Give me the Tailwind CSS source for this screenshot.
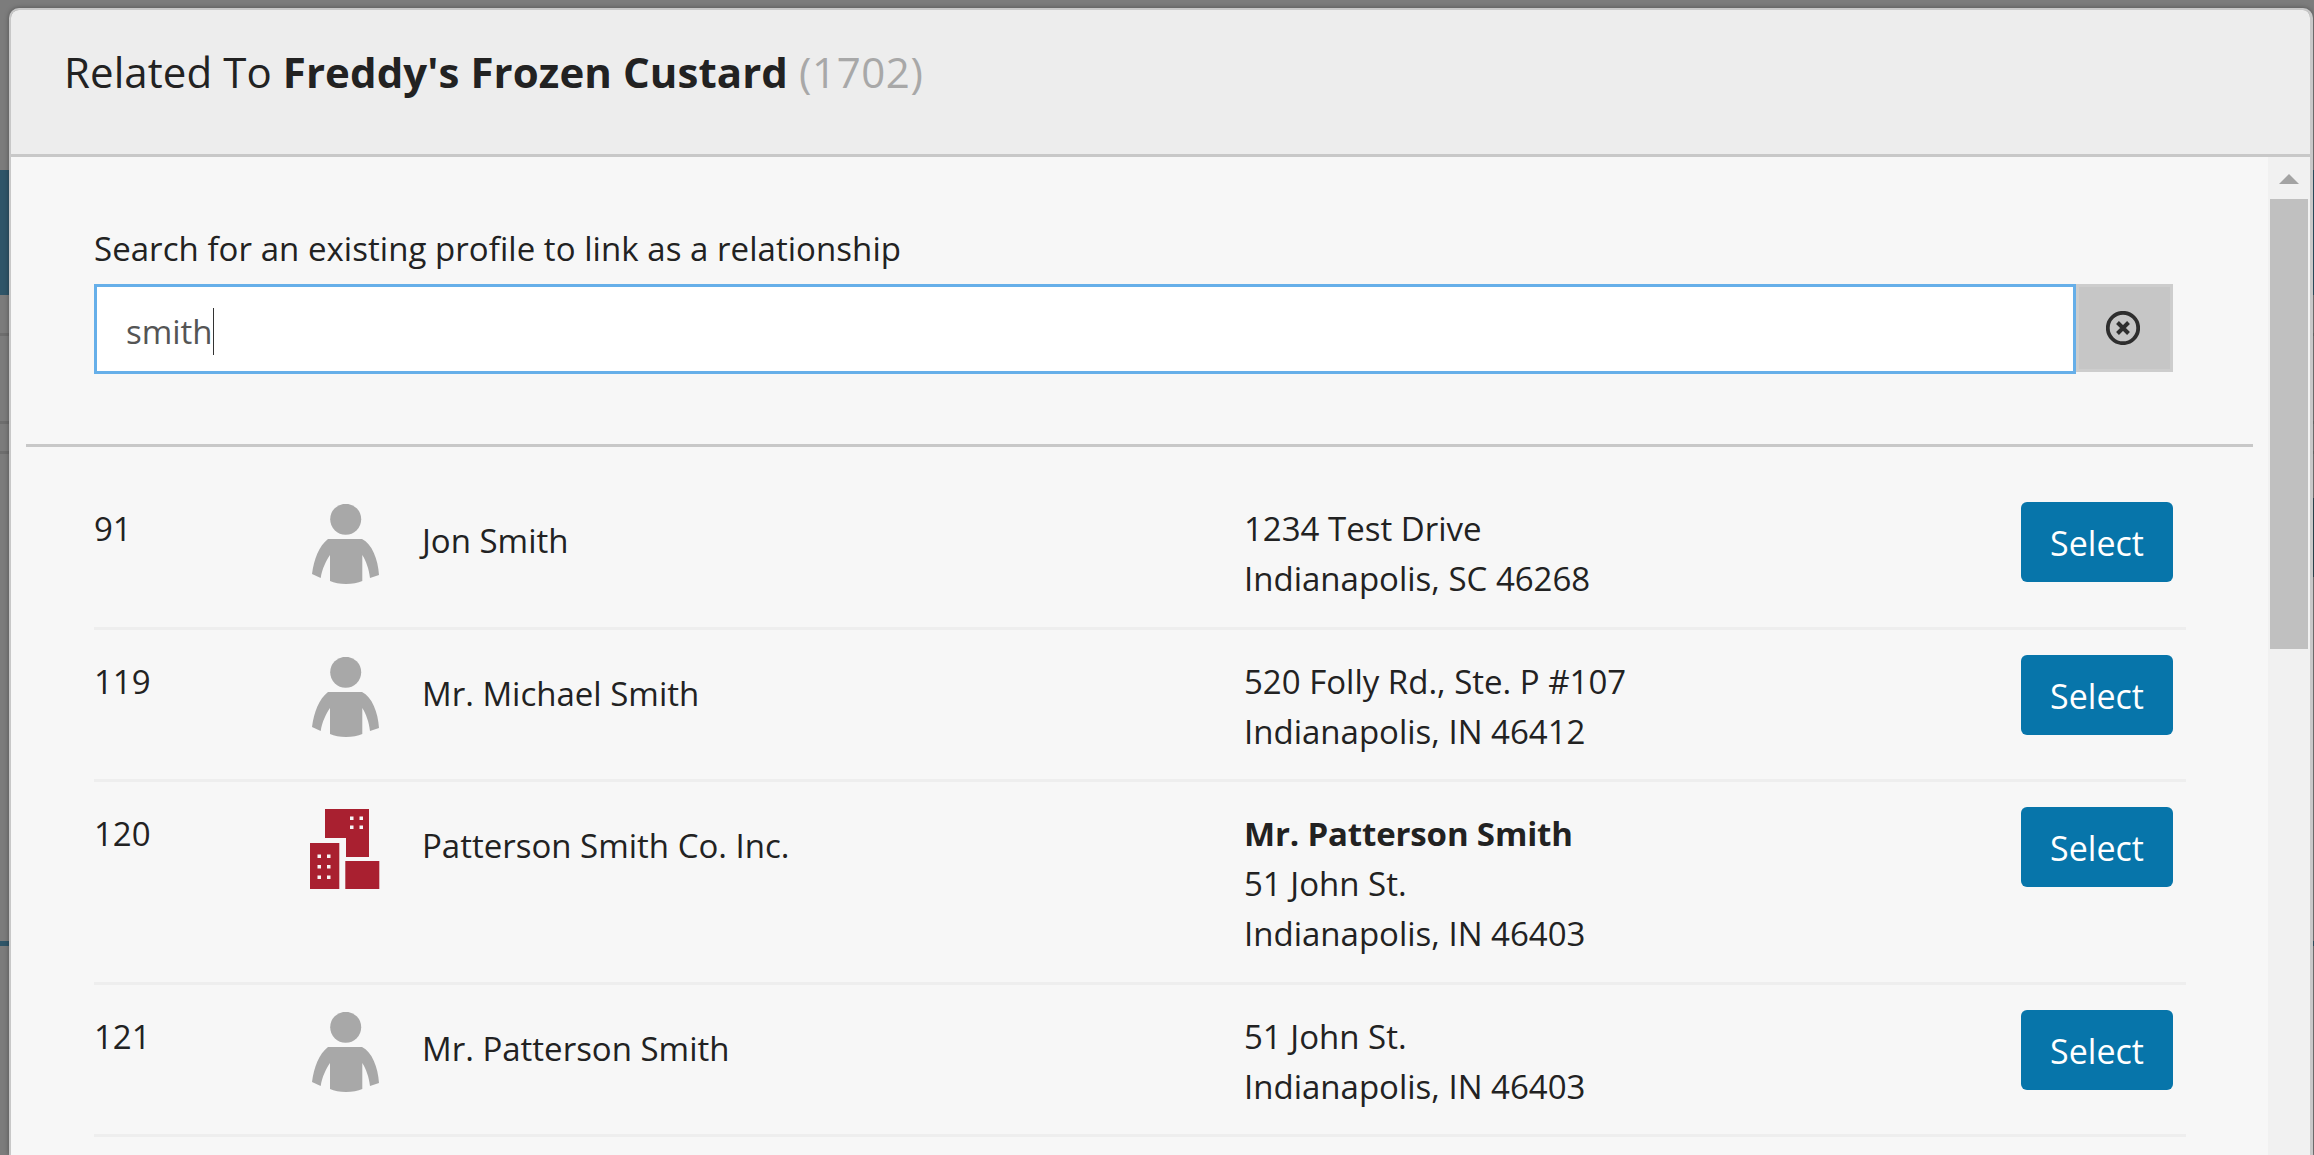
<!DOCTYPE html>
<html lang="en">
  <head>
    <meta charset="UTF-8" />
    <title>Related To</title>
    <script src="https://cdn.jsdelivr.net/npm/@tailwindcss/browser@4"></script>
  </head>
  <body class="relative h-[1155px] overflow-hidden bg-[#7c7c7c] font-['Open_Sans',sans-serif] text-[#222]">
    <!-- dimmed page behind the modal -->
    <div class="absolute left-0 right-0 top-[170px] h-[125px] bg-[#2f5568]"></div>
    <div class="absolute left-0 right-0 top-[333px] h-[3px] bg-[#6e6e6e]"></div>
    <div class="absolute left-0 right-0 top-[421px] h-[3px] bg-[#6e6e6e]"></div>
    <div class="absolute left-0 right-0 top-[451px] h-[3px] bg-[#6e6e6e]"></div>
    <div class="absolute right-0 top-[498px] h-[79px] w-px bg-[#2f4a55]"></div>
    <div class="absolute left-0 right-0 top-[941px] h-[5px] bg-[#2f5568]"></div>

    <div class="absolute left-[9px] top-[8px] flex h-[1147px] w-[2304px] flex-col overflow-hidden rounded-t-[10px] border-t-2 border-l-2 border-r-[3px] border-[#c8c8c8] shadow-[0_0_5px_rgba(0,0,0,0.35)]">
      <div class="flex h-[147px] shrink-0 items-start border-b-[3px] border-[#c8c8c8] bg-[#ededed] pl-[53px] pt-[34px] text-[42px] leading-[56px]">
        <h1 class="tracking-[0.08px]">Related To <b class="font-bold">Freddy's Frozen Custard</b> <span class="tracking-[0.6px] text-[#a8a8a8]">(1702)</span></h1>
      </div>

      <div class="flex min-h-0 flex-1 bg-[#f7f7f7]">
        <div class="min-w-0 flex-1 pl-[15px] pr-[15px]">
          <div class="pb-[70px] pl-[68px] pr-[67px] pt-[70px]">
            <label class="mb-[13px] block text-[33px] leading-[44px] tracking-[0.05px]">Search for an existing profile to link as a relationship</label>
            <div class="flex items-start pr-[13px]">
              <div class="flex h-[90px] flex-1 items-center border-[3px] border-[#66afe9] bg-white pl-[29px] pt-[4px] text-[33px] text-[#555]"><span class="relative top-[1px]">smith</span><span class="h-[47px] w-px bg-[#333]"></span></div>
              <button class="flex h-[88px] w-[97px] items-center justify-center border-[3px] border-[#cdcdcd] bg-[#c6c6c6] pr-[3px]">
                <svg class="h-[34px] w-[34px]" viewBox="0 0 34 34" fill="none" stroke="#2e2e2e">
                  <circle cx="17" cy="17" r="15.200" stroke-width="3.800" />
                  <path d="M11.500 11.500l11 11M22.500 11.500l-11 11" stroke-width="4" />
                </svg>
              </button>
            </div>
          </div>
          <div class="h-[3px] bg-[#c8c8c8]"></div>

          <div class="pl-[68px] pr-[67px] pt-[31px] text-[33px] leading-[50px]">
            <div class="flex h-[152px] border-b-[3px] border-[#eee] pt-[26px]">
              <div class="w-[218px]">91</div>
              <svg class="h-[80px] w-[68px] shrink-0" viewBox="0 0 68 80" fill="#a8a8a8"><circle cx="33.700" cy="15.300" r="15.500" /><path d="M16 35H50C60 40 66 55 67 71L58 74C57 65 54 57 50.300 51V77C42 81 26 81 18 77V51C14 57 10 65 8.700 74L0 70C2 55 7 42 16 35Z" /></svg>
              <div class="ml-[42px] w-[822px] pt-[12px]">Jon Smith</div>
              <div class="flex-1"><div>1234 Test Drive</div><div>Indianapolis, SC 46268</div></div>
              <button class="mr-[13px] mt-[-2px] h-[80px] w-[152px] rounded-[6px] bg-[#0775aa] pt-[2px] text-[34px] text-white">Select</button>
            </div>
            <div class="flex h-[152px] border-b-[3px] border-[#eee] pt-[27px]">
              <div class="w-[218px]">119</div>
              <svg class="h-[80px] w-[68px] shrink-0" viewBox="0 0 68 80" fill="#a8a8a8"><circle cx="33.700" cy="15.300" r="15.500" /><path d="M16 35H50C60 40 66 55 67 71L58 74C57 65 54 57 50.300 51V77C42 81 26 81 18 77V51C14 57 10 65 8.700 74L0 70C2 55 7 42 16 35Z" /></svg>
              <div class="ml-[42px] w-[822px] pt-[12px]">Mr. Michael Smith</div>
              <div class="flex-1"><div>520 Folly Rd., Ste. P #107</div><div>Indianapolis, IN 46412</div></div>
              <button class="mr-[13px] mt-[-2px] h-[80px] w-[152px] rounded-[6px] bg-[#0775aa] pt-[2px] text-[34px] text-white">Select</button>
            </div>
            <div class="flex h-[203px] border-b-[3px] border-[#eee] pt-[27px]">
              <div class="w-[216px]">120</div>
              <svg class="mt-[-1px] h-[82px] w-[70px] shrink-0" viewBox="0 0 70 82" fill="#a92030">
                <path d="M15 1H59V49H36V30H15Z" />
                <rect x="0" y="35" width="29.300" height="46" />
                <rect x="35.300" y="53" width="34" height="28" />
                <g fill="#f7f7f7">
                  <rect x="40" y="8.500" width="3.500" height="3.500" /><rect x="49.500" y="8.500" width="3.500" height="3.500" />
                  <rect x="40" y="17.500" width="3.500" height="3.500" /><rect x="49.500" y="17.500" width="3.500" height="3.500" />
                  <rect x="7.500" y="46.500" width="3.500" height="3.500" /><rect x="17" y="46.500" width="3.500" height="3.500" />
                  <rect x="7.500" y="57" width="3.500" height="3.500" /><rect x="17" y="57" width="3.500" height="3.500" />
                  <rect x="7.500" y="67.500" width="3.500" height="3.500" /><rect x="17" y="67.500" width="3.500" height="3.500" />
                </g>
              </svg>
              <div class="ml-[42px] w-[822px] pt-[12px]">Patterson Smith Co. Inc.</div>
              <div class="flex-1"><div class="font-bold tracking-[-0.15px]">Mr. Patterson Smith</div><div>51 John St.</div><div>Indianapolis, IN 46403</div></div>
              <button class="mr-[13px] mt-[-2px] h-[80px] w-[152px] rounded-[6px] bg-[#0775aa] pt-[2px] text-[34px] text-white">Select</button>
            </div>
            <div class="flex h-[152px] border-b-[3px] border-[#eee] pt-[27px]">
              <div class="w-[218px]">121</div>
              <svg class="h-[80px] w-[68px] shrink-0" viewBox="0 0 68 80" fill="#a8a8a8"><circle cx="33.700" cy="15.300" r="15.500" /><path d="M16 35H50C60 40 66 55 67 71L58 74C57 65 54 57 50.300 51V77C42 81 26 81 18 77V51C14 57 10 65 8.700 74L0 70C2 55 7 42 16 35Z" /></svg>
              <div class="ml-[42px] w-[822px] pt-[12px]">Mr. Patterson Smith</div>
              <div class="flex-1"><div>51 John St.</div><div>Indianapolis, IN 46403</div></div>
              <button class="mr-[13px] mt-[-2px] h-[80px] w-[152px] rounded-[6px] bg-[#0775aa] pt-[2px] text-[34px] text-white">Select</button>
            </div>
          </div>
        </div>

        <!-- scrollbar -->
        <div class="flex w-[42px] shrink-0 flex-col items-center bg-[#f1f1f1] pt-[17px]">
          <div class="h-0 w-0 border-x-[10px] border-b-[10px] border-x-transparent border-b-[#a3a3a3]"></div>
          <div class="mt-[15px] h-[450px] w-[38px] bg-[#c0c0c0]"></div>
        </div>
      </div>
    </div>
  </body>
</html>
